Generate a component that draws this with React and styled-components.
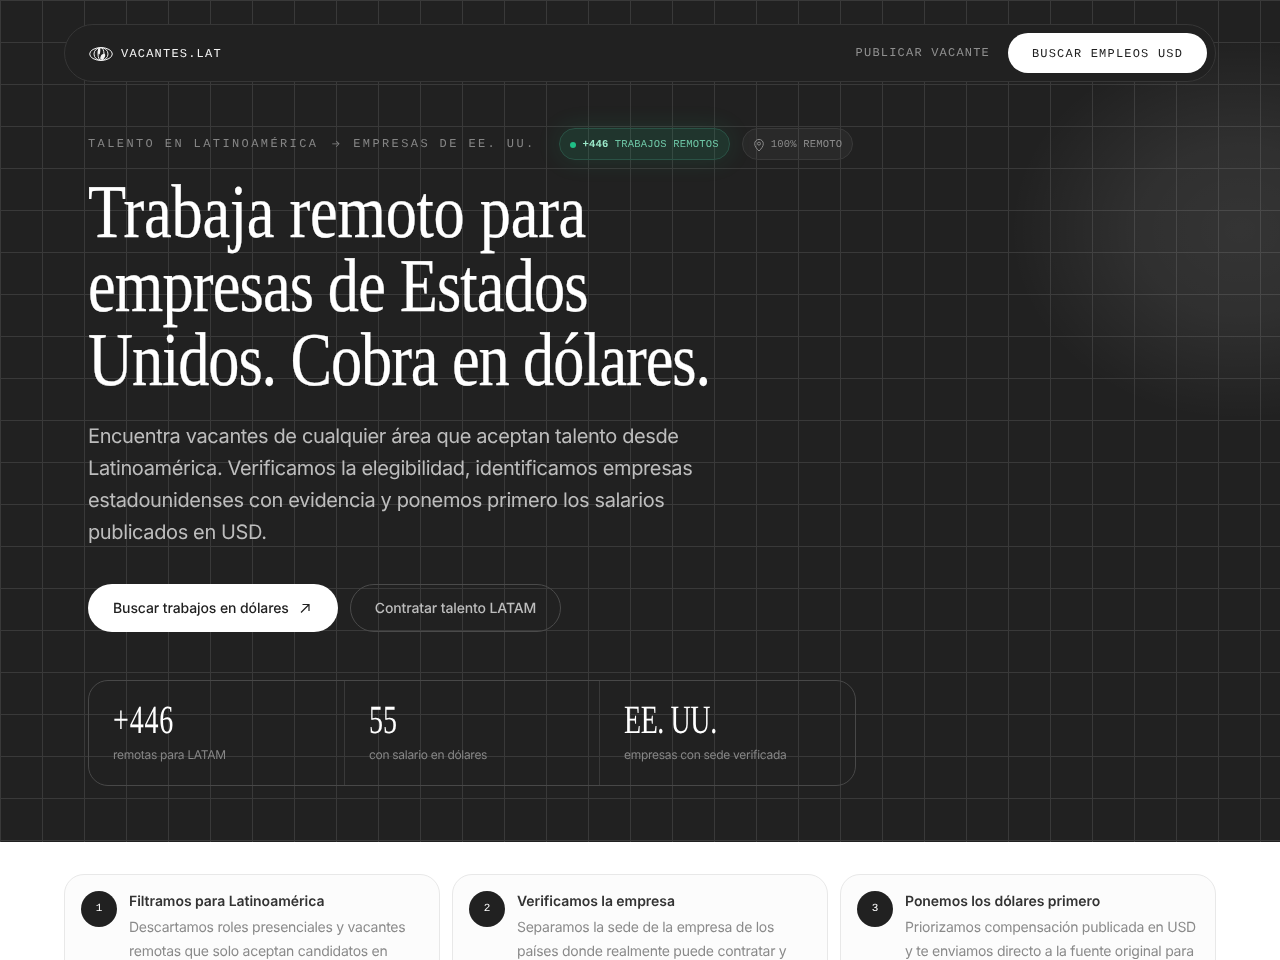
import React from "react";
import styled, { createGlobalStyle } from "styled-components";

const serif = `"Liberation Serif", serif`;
const mono = `"Liberation Mono", monospace`;
const sans = `Inter, "Liberation Sans", sans-serif`;

const GlobalStyle = createGlobalStyle`
    html, body {
        margin: 0;
        padding: 0;
        background: #ffffff;
        font-family: ${sans};
    }
    #root {
        will-change: transform;
        text-rendering: geometricPrecision;
    }
    * { box-sizing: border-box; }
`;

// hero
const Hero = styled.section`
    height: 842px;
    padding: 24px 64px 0;
    background-color: #212121;
    background-image:
        radial-gradient(ellipse 230px 190px at 1240px 230px, rgba(255,255,255,.085), rgba(255,255,255,.065) 45%, rgba(255,255,255,0) 100%),
        linear-gradient(to right, #393939 1px, transparent 1px),
        linear-gradient(to bottom, #393939 1px, transparent 1px);
    background-size: 100% 100%, 42px 42px, 42px 42px;
`;

const Nav = styled.nav`
    height: 58px;
    display: flex;
    align-items: center;
    justify-content: space-between;
    padding: 0 8px 0 24px;
    background: #212121;
    border: 1px solid #363636;
    border-radius: 29px;
`;

const Brand = styled.div`
    display: flex;
    align-items: center;
    gap: 8px;
    color: #f2f2f2;
    font: 12px ${mono};
    letter-spacing: 1.2px;
    line-height: 16px;
    padding-top: 1px;
`;

const NavLinks = styled.div`
    display: flex;
    align-items: center;
    gap: 18px;
`;

const NavLink = styled.a`
    color: #8f8f8f;
    font: 12px ${mono};
    letter-spacing: 1.2px;
`;

const NavButton = styled.a`
    height: 40px;
    width: 199px;
    padding-top: 1px;
    display: flex;
    align-items: center;
    justify-content: center;
    background: #ffffff;
    border-radius: 20px;
    color: #212121;
    font: 12px ${mono};
    letter-spacing: 1.2px;
`;

const Content = styled.div`
    padding: 46px 0 0 24px;
    width: 792px;
`;

const EyebrowRow = styled.div`
    height: 32px;
    display: flex;
    align-items: center;
`;

const Eyebrow = styled.span`
    color: #858585;
    font: 12px ${mono};
    letter-spacing: 2.4px;
    margin-right: 23px;
    white-space: nowrap;
`;

const EyebrowArrow = styled.span`
    font-family: ${sans};
    font-size: 10px;
    letter-spacing: 0;
    margin: 0 3px;
`;

const Pill = styled.span`
    height: 32px;
    display: flex;
    align-items: center;
    padding: 1px 10px 0;
    margin-right: 12px;
    border-radius: 16px;
    font: 10.5px ${mono};
    letter-spacing: .2px;
    white-space: nowrap;
    background: ${(p) => (p.$green ? "rgba(31,191,134,.13)" : "rgba(255,255,255,.04)")};
    border: 1px solid ${(p) => (p.$green ? "#2a5245" : "#393939")};
    color: ${(p) => (p.$green ? "#6cc3a3" : "#8a8a8a")};
    box-shadow: ${(p) => (p.$green ? "0 0 24px rgba(32,190,130,.14)" : "none")};
`;

const Dot = styled.i`
    width: 6px;
    height: 6px;
    border-radius: 50%;
    background: #1fbf86;
    margin-right: 7px;
`;

const PillStrong = styled.b`
    color: #9be8c9;
    margin-right: 6px;
`;

const Title = styled.h1`
    margin: 15px 0 0;
    color: #ffffff;
    font: 400 76px/74px ${serif};
    -webkit-text-stroke: .3px #ffffff;
    transform: scaleX(0.82);
    transform-origin: left top;
    white-space: nowrap;
`;

const TitleLine = styled.span`
    display: block;
    letter-spacing: ${(p) => p.$track}px;
`;

const Lead = styled.p`
    margin: 23px 0 0;
    width: 640px;
    color: #bdbdbd;
    font-size: 20px;
    line-height: 32px;
    letter-spacing: -.38px;
`;

const Actions = styled.div`
    margin-top: 36px;
    display: flex;
    gap: 12px;
`;

const PrimaryAction = styled.a`
    height: 48px;
    width: 250px;
    padding-left: 25px;
    display: flex;
    align-items: center;
    gap: 10px;
    background: #ffffff;
    border-radius: 24px;
    color: #212121;
    font-size: 14px;
    font-weight: 500;
    letter-spacing: -.1px;
`;

const SecondaryAction = styled.a`
    height: 48px;
    width: 211px;
    display: flex;
    align-items: center;
    justify-content: center;
    border: 1px solid #4a4a4a;
    border-radius: 24px;
    color: #bdbdbd;
    font-size: 14px;
    font-weight: 500;
    letter-spacing: -.12px;
`;

const Stats = styled.div`
    margin-top: 48px;
    width: 768px;
    height: 106px;
    display: grid;
    grid-template-columns: 255px 255px 1fr;
    border: 1px solid #484848;
    border-radius: 20px;
`;

const Stat = styled.div`
    padding: 19px 24px 0;
    border-left: ${(p) => (p.$first ? "0" : "1px solid #393939")};
`;

const StatValue = styled.div`
    color: #ffffff;
    font: 400 40px/40px ${serif};
    letter-spacing: ${(p) => p.$track || 0}px;
    transform: scaleX(0.7);
    transform-origin: left top;
    white-space: nowrap;
`;

const StatLabel = styled.div`
    margin-top: 7px;
    color: #868686;
    font-size: 12px;
    line-height: 16px;
    letter-spacing: -.3px;
`;

// steps
const Steps = styled.section`
    padding: 32px 64px 48px;
    background: #ffffff;
    display: grid;
    grid-template-columns: repeat(3, 1fr);
    gap: 12px;
`;

const StepCard = styled.article`
    display: flex;
    gap: 12px;
    padding: 16px;
    background: #fcfcfc;
    border: 1px solid #e8e8e8;
    border-radius: 20px;
`;

const StepNumber = styled.span`
    flex: none;
    width: 36px;
    height: 36px;
    display: flex;
    align-items: center;
    justify-content: center;
    background: #212121;
    border-radius: 50%;
    color: #ffffff;
    font: 11px ${mono};
`;

const StepBody = styled.div`
    padding-top: 1px;
`;

const StepTitle = styled.h3`
    margin: 0;
    color: #333333;
    font-size: 14px;
    font-weight: 600;
    line-height: 20px;
    letter-spacing: -.05px;
`;

const StepText = styled.p`
    margin: 4px 0 0;
    color: #8a8a8a;
    font-size: 14px;
    line-height: 24px;
    letter-spacing: -.27px;
`;

function GlobeLogo() {
    return (
        <svg width="24" height="16" viewBox="0 0 24 16" fill="none" stroke="#f2f2f2" strokeWidth="1">
            <ellipse cx="12" cy="8" rx="11.3" ry="6.4" />
            <ellipse cx="12" cy="8" rx="7" ry="6.4" />
            <ellipse cx="12" cy="8" rx="3" ry="6.4" />
            <path d="M10 2c1 0 1.5 1 1.3 3s-.3 3-1 3.5S8.5 7 8.8 5 9 2 10 2zM13 8.500c1.500-1 3-1 3.200.5s-1.200 4.500-3.200 4.500-2-1.500-1.500-2.500.5-2 1.500-2.500z" fill="#f2f2f2" stroke="none" />
        </svg>
    );
}

function PinIcon() {
    return (
        <svg width="12" height="14" viewBox="0 0 12 14" fill="none" stroke="#8a8a8a" strokeWidth="1" style={{ marginRight: 6 }}>
            <path d="M6 13C3.5 10.5 1.7 8.3 1.7 5.7a4.3 4.3 0 0 1 8.6 0C10.3 8.3 8.5 10.5 6 13z" />
            <circle cx="6" cy="5.6" r="1.5" />
        </svg>
    );
}

function ArrowIcon() {
    return (
        <svg width="12" height="12" viewBox="0 0 12 12" fill="none" stroke="#212121" strokeWidth="1.2">
            <path d="M2 10.5 10 2.5M3.5 2.5H10V9" />
        </svg>
    );
}

const steps = [
    {
        title: "Filtramos para Latinoamérica",
        text: "Descartamos roles presenciales y vacantes remotas que solo aceptan candidatos en Estados Unidos.",
    },
    {
        title: "Verificamos la empresa",
        text: "Separamos la sede de la empresa de los países donde realmente puede contratar y mostramos la evidencia.",
    },
    {
        title: "Ponemos los dólares primero",
        text: "Priorizamos compensación publicada en USD y te enviamos directo a la fuente original para aplicar.",
    },
];

export default function App() {
    return (
        <>
            <GlobalStyle />
            <Hero>
                <Nav>
                    <Brand>
                        <GlobeLogo />
                        VACANTES.LAT
                    </Brand>
                    <NavLinks>
                        <NavLink>PUBLICAR VACANTE</NavLink>
                        <NavButton>BUSCAR EMPLEOS USD</NavButton>
                    </NavLinks>
                </Nav>
                <Content>
                    <EyebrowRow>
                        <Eyebrow>
                            TALENTO EN LATINOAMÉRICA <EyebrowArrow>→</EyebrowArrow> EMPRESAS DE EE. UU.
                        </Eyebrow>
                        <Pill $green>
                            <Dot />
                            <PillStrong>+446</PillStrong>
                            TRABAJOS REMOTOS
                        </Pill>
                        <Pill>
                            <PinIcon />
                            100% REMOTO
                        </Pill>
                    </EyebrowRow>
                    <Title>
                        <TitleLine $track={-0.32}>Trabaja remoto para</TitleLine>
                        <TitleLine $track={-1.03}>empresas de Estados</TitleLine>
                        <TitleLine $track={-1.32}>Unidos. Cobra en dólares.</TitleLine>
                    </Title>
                    <Lead>
                        Encuentra vacantes de cualquier área que aceptan talento desde Latinoamérica. Verificamos la
                        elegibilidad, identificamos empresas estadounidenses con evidencia y ponemos primero los
                        salarios publicados en USD.
                    </Lead>
                    <Actions>
                        <PrimaryAction>
                            Buscar trabajos en dólares
                            <ArrowIcon />
                        </PrimaryAction>
                        <SecondaryAction>Contratar talento LATAM</SecondaryAction>
                    </Actions>
                    <Stats>
                        <Stat $first>
                            <StatValue $track={1.2}>+446</StatValue>
                            <StatLabel>remotas para LATAM</StatLabel>
                        </Stat>
                        <Stat>
                            <StatValue>55</StatValue>
                            <StatLabel>con salario en dólares</StatLabel>
                        </Stat>
                        <Stat>
                            <StatValue $track={-0.6}>EE. UU.</StatValue>
                            <StatLabel>empresas con sede verificada</StatLabel>
                        </Stat>
                    </Stats>
                </Content>
            </Hero>
            <Steps>
                {steps.map((step, i) => (
                    <StepCard key={step.title}>
                        <StepNumber>{i + 1}</StepNumber>
                        <StepBody>
                            <StepTitle>{step.title}</StepTitle>
                            <StepText>{step.text}</StepText>
                        </StepBody>
                    </StepCard>
                ))}
            </Steps>
        </>
    );
}
